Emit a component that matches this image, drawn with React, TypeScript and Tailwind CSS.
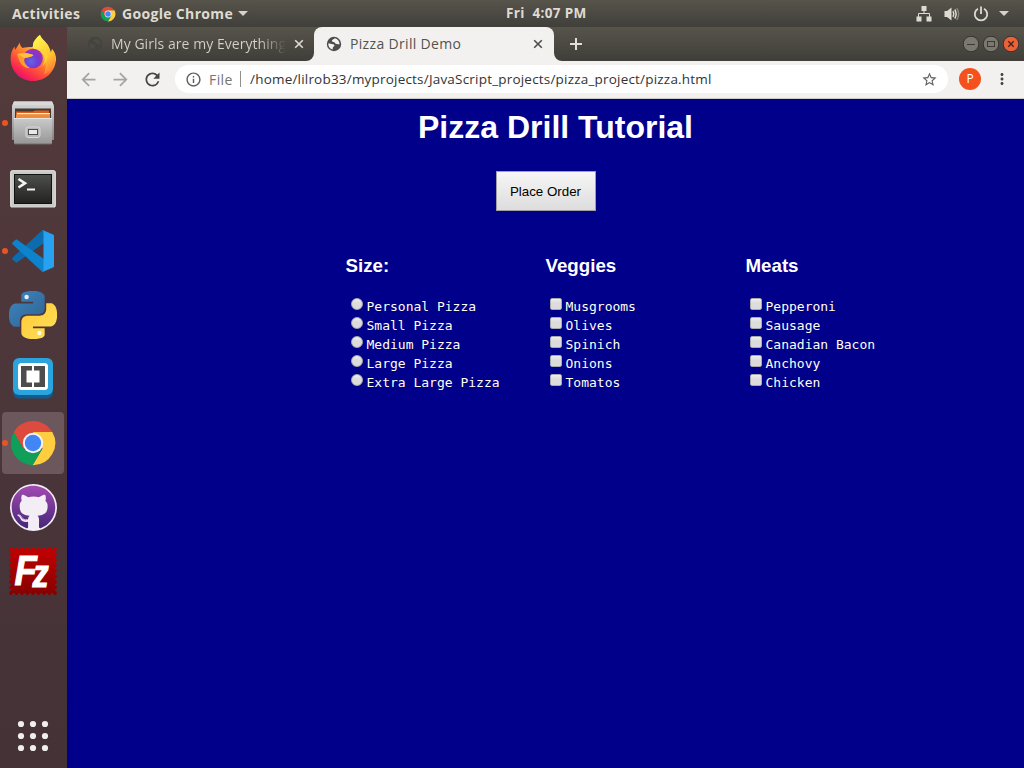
import React from "react";
import { FaGithub } from "react-icons/fa";
import { MdArrowBack, MdArrowForward, MdRefresh, MdOutlineInfo, MdStarBorder, MdMoreVert } from "react-icons/md";

const UI = "font-['Open_Sans','Noto_Sans',sans-serif]";

function ChromeLogo({ size }: { size: number }) {
  return (
    <svg width={size} height={size} viewBox="0 0 48 48" className="shrink-0">
      <path d="M24 13H43.3A22.2 22.2 0 0 1 23.6 46.2L33.6 29.5Z" fill="#ffcd40" />
      <path d="M4.9 12.9 14.4 29.4 24 35 33 30 23.6 46.2A22.2 22.2 0 0 1 4.9 12.9Z" fill="#109f58" />
      <path d="M4.9 12.9A22.2 22.2 0 0 1 43.3 13H24L14.5 29.5Z" fill="#dd4b3e" />
      <circle cx="24" cy="24" r="10.2" fill="#f4f4f4" />
      <circle cx="24" cy="24" r="8.2" fill="#4285f4" />
    </svg>
  );
}

function Globe({ land, sea }: { land: string; sea: string }) {
  return (
    <svg width="16" height="16" viewBox="0 0 16 16" className="shrink-0">
      <circle cx="8" cy="8" r="7.200" fill={land} />
      <path d="M9 2.300C7 3.500 5.500 3.800 6 5.300C6.500 6.500 8.500 5.500 9 7C9.500 8.500 11.500 8 13.600 8.200C13.500 5 11.500 2.700 9 2.300Z" fill={sea} />
      <path d="M2.200 7.500C4 7.300 5 8.300 7 8.200C8.500 8.300 9 10 7.500 10.800C6.500 11.300 7 12.500 6.500 13.600C4 13 2.200 10.500 2.200 7.500Z" fill={sea} />
    </svg>
  );
}

function Firefox() {
  return (
    <svg width="48" height="48" viewBox="0 0 48 48">
      <defs>
        <linearGradient id="ffBody" x1="0.85" y1="0.05" x2="0.25" y2="1">
          <stop offset="0" stopColor="#fff44f" />
          <stop offset="0.35" stopColor="#ffb02e" />
          <stop offset="0.62" stopColor="#ff5f35" />
          <stop offset="0.85" stopColor="#f9264f" />
          <stop offset="1" stopColor="#e00b84" />
        </linearGradient>
        <linearGradient id="ffTail" x1="0.3" y1="0" x2="0.8" y2="1">
          <stop offset="0" stopColor="#fff650" />
          <stop offset="0.6" stopColor="#ffc52c" />
          <stop offset="1" stopColor="#ff7139" />
        </linearGradient>
        <radialGradient id="ffGlobe" cx="0.4" cy="0.65" r="0.65">
          <stop offset="0" stopColor="#6065e8" />
          <stop offset="0.55" stopColor="#733bd0" />
          <stop offset="1" stopColor="#a52cc1" />
        </radialGradient>
      </defs>
      <path d="M24 46C11 46 1.600 36 1.600 23.500C1.600 18.500 3.400 14 5.700 11.500L6 15L9.700 9.500L10.300 7.500C11 9.500 12 12 13.500 13C16 12 20 12 24 12L24 8C26 4 29 1 31 0C33 5 37 6 39.500 12C40.500 14 41.500 16 42 18L43 14C46 17 47 21 47 24.500C46 37 36.500 46 24 46Z" fill="url(#ffBody)" />
      <path d="M23.500 13C24 7 28 2 31 0C33 6 41 7 42 20L43 14C46 18 47 22 46 27C44 35 39 38 35 39C38 32 37 20 31 16Z" fill="url(#ffTail)" />
      <circle cx="24" cy="23.500" r="9.800" fill="url(#ffGlobe)" />
      <path d="M8 19C14 17.500 20 18 24.500 20C22 23 18 22 16 23C14 25 16 30 21 33C13 34 10 26 8 19Z" fill="#ff9a2e" />
      <path d="M8 19C14 17.500 20 18 24.500 20C22 22 19 22 16 23Z" fill="#ffc03a" />
      <path d="M31 14C36 17 38 24 33 32C37 28 41 21 36 15Z" fill="#ffd13b" />
    </svg>
  );
}

function Files() {
  return (
    <svg width="48" height="48" viewBox="0 0 48 48">
      <defs>
        <linearGradient id="cabTop" x1="0" y1="0" x2="0" y2="1">
          <stop offset="0" stopColor="#d8d8d8" />
          <stop offset="1" stopColor="#858585" />
        </linearGradient>
        <linearGradient id="cabFront" x1="0" y1="0" x2="0" y2="1">
          <stop offset="0" stopColor="#cacaca" />
          <stop offset="1" stopColor="#969696" />
        </linearGradient>
      </defs>
      <path d="M5 2.500H43L45 7V41H3V7Z" fill="url(#cabTop)" />
      <path d="M5 2.500H43L44.500 6H3.500Z" fill="#d9d9d9" />
      <rect x="6" y="9.500" width="36" height="12" fill="#443a32" />
      <path d="M7 12.500H24L26 11.500H40V20H7Z" fill="#d95f1d" />
      <rect x="8" y="14" width="33" height="1.500" fill="#fff1d8" />
      <rect x="7" y="15.500" width="34" height="4" fill="#ee8c39" />
      <rect x="5" y="19" width="38" height="26" rx="1" fill="url(#cabFront)" />
      <path d="M5 19.500H43" stroke="#e6e6e6" />
      <path d="M5.500 45H42.500" stroke="#6c6c6c" />
      <rect x="17" y="28" width="14" height="10.500" rx="2" fill="#b7b7b7" stroke="#d8d8d8" />
      <rect x="19.500" y="30.500" width="9" height="5" fill="#e9e9e9" stroke="#4d4d4d" />
    </svg>
  );
}

function Terminal() {
  return (
    <svg width="48" height="48" viewBox="0 0 48 48">
      <defs>
        <linearGradient id="termScreen" x1="0" y1="0" x2="0" y2="1">
          <stop offset="0" stopColor="#4e504d" />
          <stop offset="0.6" stopColor="#333432" />
          <stop offset="1" stopColor="#232422" />
        </linearGradient>
      </defs>
      <rect x="1.700" y="7.700" width="44.600" height="36.600" rx="1.500" fill="#c9c9c7" stroke="#eeeeec" />
      <path d="M2 44.500H46" stroke="#8b8b89" />
      <rect x="5.500" y="11.500" width="37" height="29" fill="url(#termScreen)" stroke="#111" />
      <path d="M9.500 16L16 20.200L9.500 24.500" fill="none" stroke="#f3f3f3" strokeWidth="2.600" />
      <path d="M18 26.500H26" stroke="#f3f3f3" strokeWidth="2" />
    </svg>
  );
}

function Code() {
  return (
    <svg width="48" height="48" viewBox="0 0 48 48">
      <path d="M33.500 3C34 2.700 35 3 35 4V16L8.200 35.300C7.600 35.700 7 35.600 6.500 35.200L3.500 32.500C3 32 3 31.200 3.500 30.700Z" fill="#0d6cae" />
      <path d="M33.500 45C34 45.300 35 45 35 44V32L8.200 12.700C7.600 12.300 7 12.400 6.500 12.800L3.500 15.500C3 16 3 16.800 3.500 17.300Z" fill="#0d83cd" />
      <path d="M33.500 3L44 7.500C44.700 7.800 45 8.300 45 9V39C45 39.700 44.700 40.200 44 40.500L33.500 45C34.300 44.500 34.500 44 34.500 43V5C34.500 4 34.300 3.500 33.500 3Z" fill="#28a1f0" />
    </svg>
  );
}

const SNAKE =
  "M14.25.18l.9.2.73.26.59.3.45.32.34.34.25.34.16.33.1.3.04.26.02.2-.01.13V8.5l-.05.63-.13.55-.21.46-.26.38-.3.31-.33.25-.35.19-.35.14-.33.1-.3.07-.26.04-.21.02H8.77l-.69.05-.59.14-.5.22-.41.27-.33.32-.27.35-.2.36-.15.37-.1.35-.07.32-.04.27-.02.21v3.06H3.17l-.21-.03-.28-.07-.32-.12-.35-.18-.36-.26-.36-.36-.35-.46-.32-.59-.28-.73-.21-.88-.14-1.05-.05-1.23.06-1.22.16-1.04.24-.87.32-.71.36-.57.4-.44.42-.33.42-.24.4-.16.36-.1.32-.05.24-.01h.16l.06.01h8.16v-.83H6.18l-.01-2.75-.02-.37.05-.34.11-.31.17-.28.25-.26.31-.23.38-.2.44-.18.51-.15.58-.12.64-.1.71-.06.77-.04.84-.02 1.27.05z";

function Python() {
  return (
    <svg width="48" height="48" viewBox="0 0 24 24">
      <defs>
        <linearGradient id="pyBlue" x1="0" y1="0" x2="1" y2="1">
          <stop offset="0" stopColor="#3d87c1" />
          <stop offset="1" stopColor="#2f618f" />
        </linearGradient>
        <linearGradient id="pyGold" x1="1" y1="1" x2="0" y2="0">
          <stop offset="0" stopColor="#ffc836" />
          <stop offset="1" stopColor="#ffe15b" />
        </linearGradient>
      </defs>
      <path d={SNAKE} fill="url(#pyBlue)" />
      <path d={SNAKE} transform="rotate(180 12 12)" fill="url(#pyGold)" />
      <circle cx="8.800" cy="3" r="1.100" fill="#e4f0f8" />
      <circle cx="15.200" cy="21" r="1.100" fill="#fff8dc" />
    </svg>
  );
}

function Brackets() {
  return (
    <svg width="48" height="48" viewBox="0 0 48 48">
      <rect x="4" y="6" width="40" height="37.500" rx="6" fill="#0d5d92" />
      <rect x="4" y="3" width="40" height="37" rx="6" fill="#2ba3dc" />
      <rect x="9" y="8" width="30" height="27" rx="3.500" fill="#fff" />
      <path d="M12 11H36V32H12Z" fill="#4d4d4d" />
      <path d="M17.500 15.500H23V11H25V15.500H30.500V27.500H25V32H23V27.500H17.500Z" fill="#fff" />
    </svg>
  );
}

function GitHub() {
  return (
    <span className="grid size-[47px] place-items-center rounded-full bg-[#f3eef5]">
      <svg width="0" height="0" className="absolute">
        <linearGradient id="ghPurple" x1="0" y1="0" x2="0" y2="1">
          <stop offset="0" stopColor="#a24bb2" />
          <stop offset="1" stopColor="#472778" />
        </linearGradient>
      </svg>
      <FaGithub size={45} fill="url(#ghPurple)" />
    </span>
  );
}

function FileZilla() {
  return (
    <svg width="48" height="48" viewBox="0 0 48 48">
      <defs>
        <linearGradient id="fzRed" x1="0" y1="0" x2="0" y2="48" gradientUnits="userSpaceOnUse">
          <stop offset="0" stopColor="#c40000" />
          <stop offset="1" stopColor="#860000" />
        </linearGradient>
      </defs>
      <rect x="2" y="2" width="44" height="44" fill="url(#fzRed)" stroke="url(#fzRed)" strokeWidth="3.800" strokeDasharray="0.010 5.490" strokeLinecap="round" />
      <g fontFamily="Liberation Sans" fontWeight="bold" fontStyle="italic" fill="#fff" stroke="#fff">
        <text transform="translate(5.500 38) scale(0.85 1)" fontSize="43" strokeWidth="1" letterSpacing="-5">F<tspan fontSize="38" dy="2">z</tspan></text>
      </g>
    </svg>
  );
}

function AppGrid() {
  const steps = [12, 24, 36];
  return (
    <svg width="48" height="48" viewBox="0 0 48 48" fill="#f0eeee">
      {steps.map((y) => steps.map((x) => <circle key={`${x}-${y}`} cx={x} cy={y} r="3.100" />))}
    </svg>
  );
}

function DockItem({ children, running, active }: { children: React.ReactNode; running?: boolean; active?: boolean }) {
  return (
    <div className="flex h-16 w-[66px] items-center pl-0.5">
      <div className={active ? "relative grid h-[62px] w-[62px] place-items-center rounded bg-[#6b575c]" : "relative grid h-[62px] w-[62px] place-items-center"}>
        {running && <span className="absolute top-[28px] left-0 size-[6px] rounded-full bg-[#e95420]" />}
        {children}
      </div>
    </div>
  );
}

function Cross({ color }: { color: string }) {
  return (
    <svg width="10" height="10" viewBox="0 0 10 10" className="shrink-0">
      <path d="M1.200 1.200L8.800 8.800M8.800 1.200L1.200 8.800" stroke={color} strokeWidth="1.600" />
    </svg>
  );
}

function TopBar() {
  return (
    <header className={`flex h-[27px] items-center bg-linear-to-b from-[#57544b] to-[#403f3a] text-[14px] font-bold text-[#dfdbd2] ${UI}`}>
      <span className="ml-3 w-[88px] pb-px tracking-[0.320px] whitespace-nowrap">Activities</span>
      <ChromeLogo size={16} />
      <span className="ml-1.5 w-[111px] pb-px tracking-[0.330px] whitespace-nowrap">Google Chrome</span>
      <svg width="10" height="5" className="ml-[5px]"><path d="M0 0H10L5 5Z" fill="#d6d3cb" /></svg>
      <span className="ml-[258px] w-[84px] pb-px text-[13.500px] tracking-[0.360px] whitespace-pre">Fri  4:07 PM</span>
      <div className="ml-auto flex items-center pr-[15px]">
        <svg width="16" height="16" viewBox="0 0 16 16" fill="#dfdbd2">
          <path d="M5.500 0h5v5h-5zM0.500 10.500h5v5h-5zM10.500 10.500h5v5h-5z" />
          <path d="M8 5v3M2.500 11V7.500h11V11" fill="none" stroke="#dfdbd2" />
        </svg>
        <svg width="16" height="16" viewBox="0 0 16 16" className="ml-3">
          <path d="M0.500 5H3L7.500 1.500V14.500L3 11H0.500Z" fill="#dfdbd2" />
          <path d="M9 5.200Q10.600 8 9 10.800M10.800 3.500Q13.400 8 10.800 12.500" fill="none" stroke="#dfdbd2" strokeWidth="1.500" />
          <path d="M12.800 2Q16.500 8 12.800 14" fill="none" stroke="#8c8982" strokeWidth="1.400" />
        </svg>
        <svg width="16" height="16" viewBox="0 0 16 16" className="ml-[13px]" fill="none" stroke="#dfdbd2" strokeWidth="1.800">
          <path d="M5 2.700A6.200 6.200 0 1 0 11 2.700M8 .5V8" />
        </svg>
        <svg width="10" height="5" className="ml-[10px]"><path d="M0 0H10L5 5Z" fill="#d6d3cb" /></svg>
      </div>
    </header>
  );
}

function TabStrip() {
  return (
    <div className={`flex h-[34px] bg-linear-to-b from-[#57544b] to-[#3f3e39] text-[14px] ${UI}`}>
      <div className="flex w-[247px] items-center pl-5">
        <Globe land="#44443f" sea="#4c4a44" />
        <span className="ml-[8px] w-[175px] overflow-hidden bg-linear-to-r from-[#d5d2ca] from-85% to-transparent bg-clip-text pb-0.5 tracking-[0.050px] whitespace-nowrap text-transparent">My Girls are my Everything</span>
        <span className="ml-[8px] flex"><Cross color="#dfdcd5" /></span>
      </div>
      <div className="relative flex w-[240px] items-center rounded-t-lg bg-[#f2f1f0] pl-[12px] text-[#53534f]">
        <svg width="8" height="8" className="absolute bottom-0 -left-2"><path d="M8 0V8H0A8 8 0 0 0 8 0Z" fill="#f2f1f0" /></svg>
        <svg width="8" height="8" className="absolute -right-2 bottom-0"><path d="M0 0V8H8A8 8 0 0 1 0 0Z" fill="#f2f1f0" /></svg>
        <Globe land="#4d4d4d" sea="#f2f1f0" />
        <span className="ml-2 w-[183px] pb-0.5 tracking-[0.330px] whitespace-nowrap">Pizza Drill Demo</span>
        <Cross color="#4d4d4a" />
      </div>
      <svg width="12" height="12" className="mt-[11px] ml-4"><path d="M6 0V12M0 6H12" stroke="#e2dfd9" strokeWidth="2" /></svg>
      <div className="ml-auto flex items-center gap-1 pr-[5px]">
        <svg width="16" height="16" viewBox="0 0 16 16"><circle cx="8" cy="8" r="7.800" fill="#7a786f" stroke="#35342f" /><path d="M4 8.500H12" stroke="#3b3a35" /></svg>
        <svg width="16" height="16" viewBox="0 0 16 16"><circle cx="8" cy="8" r="7.800" fill="#7a786f" stroke="#35342f" /><rect x="4.500" y="5.500" width="7" height="5" fill="none" stroke="#3b3a35" /></svg>
        <svg width="16" height="16" viewBox="0 0 16 16"><circle cx="8" cy="8" r="7.800" fill="#ec6138" stroke="#35342f" /><path d="M5.300 5.300L10.700 10.700M10.700 5.300L5.300 10.700" stroke="#46261a" strokeWidth="1.400" /></svg>
      </div>
    </div>
  );
}

function AddressBar() {
  return (
    <div className={`flex h-[38px] items-center border-b border-[#c9c8c6] bg-[#f2f1f0] pb-px text-[14px] ${UI}`}>
      <MdArrowBack size={21} color="#a5a4a3" className="ml-[11px]" />
      <MdArrowForward size={21} color="#a5a4a3" className="ml-[11px]" />
      <MdRefresh size={21} color="#454542" className="ml-[11px]" />
      <div className="ml-[12px] flex h-7 w-[773px] items-center rounded-full bg-white pr-[10px] pl-[10px]">
        <MdOutlineInfo size={17} color="#5c5c5a" />
        <span className="ml-[7px] w-[31px] tracking-[0.400px] text-[#757574]">File</span>
        <span className="h-4 w-px bg-[#8f8f8e]" />
        <span className="ml-[9px] text-[13.500px] tracking-[0.200px] whitespace-nowrap text-[#333]">/home/lilrob33/myprojects/JavaScript_projects/pizza_project/pizza.html</span>
        <MdStarBorder size={17} color="#626261" className="ml-auto" />
      </div>
      <span className="ml-[11px] grid size-[22px] place-items-center rounded-full bg-[#f4511e] text-[12px] text-white">P</span>
      <MdMoreVert size={18} color="#454542" className="ml-[12px]" />
    </div>
  );
}

function Choices({ title, items, round }: { title: string; items: string[]; round?: boolean }) {
  return (
    <section className="w-[200px]">
      <h3 className="h-[22px] font-['Liberation_Sans',sans-serif] text-[18.720px] leading-[22px] font-bold text-white">{title}</h3>
      <div className={round ? "mt-[19px] pl-[5.500px]" : "mt-[19px] pl-[4.500px]"}>
        {items.map((item) => (
          <div key={item} className="flex h-[19px] font-['DejaVu_Sans_Mono',monospace] text-[13px] leading-[21px] text-[#fffff0]">
            <span className={round
              ? "mt-[2px] mr-[3.500px] size-[12px] shrink-0 rounded-full border border-[#aaa] bg-linear-to-b from-[#eee] to-[#dcdcdc] to-40%"
              : "mt-[2px] mr-[3.500px] size-[12px] shrink-0 rounded-[2px] border border-[#aaa] bg-linear-to-b from-[#eee] to-[#dcdcdc] to-40%"} />
            <span className="whitespace-nowrap">{item}</span>
          </div>
        ))}
      </div>
    </section>
  );
}

export default function App() {
  return (
    <div className="flex h-screen w-screen flex-col overflow-hidden">
      <TopBar />
      <div className="flex min-h-0 flex-1">
        <aside className="flex w-[67px] shrink-0 flex-col bg-linear-to-b from-[#543a3b] via-[#4b363a] to-[#443237]">
          <DockItem><Firefox /></DockItem>
          <DockItem running><Files /></DockItem>
          <DockItem><Terminal /></DockItem>
          <DockItem running><Code /></DockItem>
          <DockItem><Python /></DockItem>
          <DockItem><Brackets /></DockItem>
          <DockItem running active><ChromeLogo size={48} /></DockItem>
          <DockItem><GitHub /></DockItem>
          <DockItem><FileZilla /></DockItem>
          <div className="mt-auto"><DockItem><AppGrid /></DockItem></div>
        </aside>
        <div className="flex min-w-0 flex-1 flex-col">
          <TabStrip />
          <AddressBar />
          <main className="flex-1 bg-[#00008b]">
            <h1 className="ml-[351px] pt-[10px] font-['Liberation_Sans',sans-serif] text-[32px] leading-[37px] font-bold text-white">Pizza Drill Tutorial</h1>
            <button className="mt-[25px] ml-[429px] block h-[40px] w-[100px] border border-[#a0a0a0] bg-linear-to-b from-[#f6f6f6] to-[#dddddd] pt-[2px] pr-px font-['Liberation_Sans',sans-serif] text-[13.333px] text-black">Place Order</button>
            <div className="mt-[44px] ml-[278.500px] flex">
              <Choices round title="Size:" items={["Personal Pizza", "Small Pizza", "Medium Pizza", "Large Pizza", "Extra Large Pizza"]} />
              <Choices title="Veggies" items={["Musgrooms", "Olives", "Spinich", "Onions", "Tomatos"]} />
              <Choices title="Meats" items={["Pepperoni", "Sausage", "Canadian Bacon", "Anchovy", "Chicken"]} />
            </div>
          </main>
        </div>
      </div>
    </div>
  );
}
